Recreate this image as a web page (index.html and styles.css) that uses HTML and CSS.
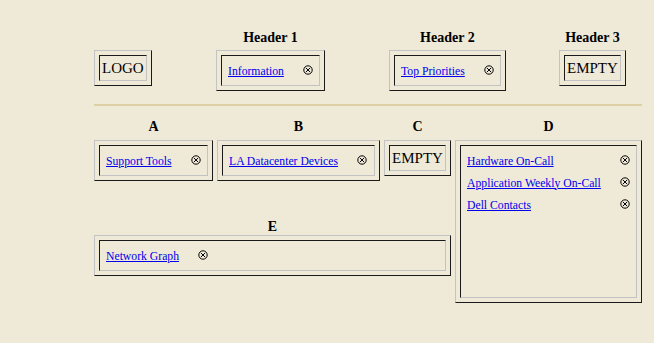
FILE: index.html
```html
<!DOCTYPE html>
<html lang="en">
<head>
  <meta charset="UTF-8">
  <meta name="viewport" content="width=device-width, initial-scale=1.0">
  <title>Dashboard Layout</title>
  <link rel="stylesheet" href="styles.css">
</head>
<body>
  <div class="page">
    <!-- Header row -->
    <div class="top">
      <div class="slot slot-logo">
        <div class="outer"><div class="inner plain">LOGO</div></div>
      </div>
      <div class="slot">
        <div class="label">Header 1</div>
        <div class="outer">
          <div class="inner links">
            <a href="#">Information</a>
            <span class="remove"><svg width="10" height="10" viewBox="0 0 10 10"><circle cx="5" cy="5" r="4.2" fill="none" stroke="#000" stroke-width="1"/><path d="M3 3L7 7M7 3L3 7" stroke="#000" stroke-width="1"/></svg></span>
          </div>
        </div>
      </div>
      <div class="slot">
        <div class="label">Header 2</div>
        <div class="outer">
          <div class="inner links">
            <a href="#">Top Priorities</a>
            <span class="remove"><svg width="10" height="10" viewBox="0 0 10 10"><circle cx="5" cy="5" r="4.2" fill="none" stroke="#000" stroke-width="1"/><path d="M3 3L7 7M7 3L3 7" stroke="#000" stroke-width="1"/></svg></span>
          </div>
        </div>
      </div>
      <div class="slot">
        <div class="label">Header 3</div>
        <div class="outer"><div class="inner plain">EMPTY</div></div>
      </div>
    </div>

    <div class="rule"></div>

    <!-- Content columns -->
    <div class="board">
      <div class="label col-a">A</div>
      <div class="label col-b">B</div>
      <div class="label col-c">C</div>
      <div class="label col-d">D</div>

      <div class="outer col-a row-box">
        <div class="inner links">
          <a href="#">Support Tools</a>
          <span class="remove"><svg width="10" height="10" viewBox="0 0 10 10"><circle cx="5" cy="5" r="4.2" fill="none" stroke="#000" stroke-width="1"/><path d="M3 3L7 7M7 3L3 7" stroke="#000" stroke-width="1"/></svg></span>
        </div>
      </div>

      <div class="outer col-b row-box">
        <div class="inner links">
          <a href="#">LA Datacenter Devices</a>
          <span class="remove"><svg width="10" height="10" viewBox="0 0 10 10"><circle cx="5" cy="5" r="4.2" fill="none" stroke="#000" stroke-width="1"/><path d="M3 3L7 7M7 3L3 7" stroke="#000" stroke-width="1"/></svg></span>
        </div>
      </div>

      <div class="outer col-c row-box">
        <div class="inner plain">EMPTY</div>
      </div>

      <div class="outer box-d">
        <div class="inner links">
          <a href="#">Hardware On-Call</a>
          <span class="remove"><svg width="10" height="10" viewBox="0 0 10 10"><circle cx="5" cy="5" r="4.2" fill="none" stroke="#000" stroke-width="1"/><path d="M3 3L7 7M7 3L3 7" stroke="#000" stroke-width="1"/></svg></span>
          <a href="#">Application Weekly On-Call</a>
          <span class="remove"><svg width="10" height="10" viewBox="0 0 10 10"><circle cx="5" cy="5" r="4.2" fill="none" stroke="#000" stroke-width="1"/><path d="M3 3L7 7M7 3L3 7" stroke="#000" stroke-width="1"/></svg></span>
          <a href="#">Dell Contacts</a>
          <span class="remove"><svg width="10" height="10" viewBox="0 0 10 10"><circle cx="5" cy="5" r="4.2" fill="none" stroke="#000" stroke-width="1"/><path d="M3 3L7 7M7 3L3 7" stroke="#000" stroke-width="1"/></svg></span>
        </div>
      </div>

      <div class="label label-e">E</div>
      <div class="outer box-e">
        <div class="inner links">
          <a href="#">Network Graph</a>
          <span class="remove"><svg width="10" height="10" viewBox="0 0 10 10"><circle cx="5" cy="5" r="4.2" fill="none" stroke="#000" stroke-width="1"/><path d="M3 3L7 7M7 3L3 7" stroke="#000" stroke-width="1"/></svg></span>
        </div>
      </div>
    </div>
  </div>
</body>
</html>
```

FILE: styles.css
```css
body {
  margin: 0;
  background-color: #efe9d7;
  font-family: "Liberation Serif", "Times New Roman", serif;
  color: #000;
}

.page {
  padding: 30px 0 0 94px;
}

/* header row */
.top {
  display: grid;
  grid-template-columns: 122px 173px 170px auto;
  align-items: start;
  justify-items: start;
}

.slot {
  display: flex;
  flex-direction: column;
  align-items: center;
}

.slot-logo {
  padding-top: 20px;
}

.label {
  font-weight: bold;
  font-size: 14px;
  line-height: 16px;
  text-align: center;
}

.top .label {
  margin-bottom: 4px;
}

/* table-like raised / sunken boxes */
.outer {
  box-sizing: border-box;
  border: 1px solid;
  border-color: #c3c3c3 #1a1a1a #1a1a1a #c3c3c3;
  padding: 4px;
}

.inner {
  border: 1px solid;
  border-color: #1a1a1a #c3c3c3 #c3c3c3 #1a1a1a;
}

.plain {
  font-size: 15px;
  line-height: 18px;
  padding: 3px 2px;
  text-align: center;
}

.links {
  display: grid;
  grid-template-columns: max-content max-content;
  grid-auto-rows: 22px;
  column-gap: 19px;
  align-items: center;
  align-content: start;
  padding: 4px 6px 3px 6px;
  font-size: 11.7px;
  white-space: nowrap;
}

.links a {
  color: #0000ee;
}

.remove svg {
  display: block;
  margin-bottom: 2px;
}

.rule {
  width: 548px;
  height: 2px;
  background-color: #dfcfa4;
  margin: 13px 0;
}

/* lower columns */
.board {
  display: grid;
  grid-template-columns: 119px 163px 67px 187px;
  grid-template-rows: 21px 41px 54px 41px 27px;
  column-gap: 4px;
  align-items: start;
}

.col-a { grid-column: 1; }
.col-b { grid-column: 2; }
.col-c { grid-column: 3; }
.col-d { grid-column: 4; }

.row-box {
  grid-row: 2;
}

.box-d {
  grid-column: 4;
  grid-row: 2 / 6;
  align-self: stretch;
  display: flex;
  flex-direction: column;
}

.box-d .inner {
  flex: 1;
}

.label-e {
  grid-column: 1 / 4;
  grid-row: 3;
  align-self: end;
}

.box-e {
  grid-column: 1 / 4;
  grid-row: 4;
}
```
